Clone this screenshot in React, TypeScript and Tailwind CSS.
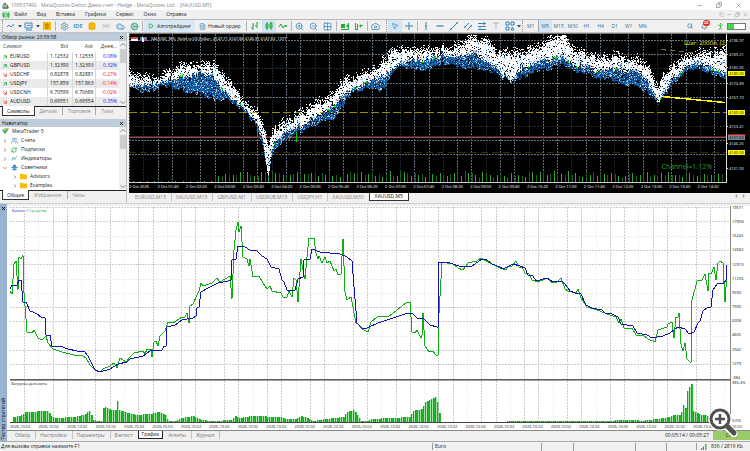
import { ReactNode, useState } from "react";
import {
  Bell, Camera, Cloud, Cog, FileText, Grid2x2, Minus, MousePointer2,
  PersonStanding, Play, Radio, Search, Settings, ShoppingBag, X, ZoomIn, ZoomOut, Copy, Users, RefreshCw,
} from "lucide-react";
import { clsx } from "clsx";
import { twMerge } from "tailwind-merge";

type Point = [number, number];
type Band  = [number, number, number, number]; // x, top, bottom of the white part, bottom of the blue part

const MENU       = ["Файл", "Вид", "Вставка", "Графики", "Сервис", "Окно", "Справка"];
const TIMEFRAMES = ["M1", "M5", "M15", "M30", "H1", "H4", "D1", "W1", "MN"];
const CHART_TABS = ["EURUSD,M15", "XAUUSD,M15", "GBPUSD,M1", "USDRUB,M15", "USDJPY,H1", "XAUUSD,M30", "XAUUSD,M5"];
const TEST_TABS  = ["Обзор", "Настройки", "Параметры", "Бэктест", "График", "Агенты", "Журнал"];

const QUOTES = [
  { symbol: "EURUSD", bid: "1.12532", ask: "1.12535", day: "0.08%",  up: true  },
  { symbol: "GBPUSD", bid: "1.32390", ask: "1.32393", day: "0.32%",  up: true  },
  { symbol: "USDCHF", bid: "0.82878", ask: "0.82881", day: "-0.27%", up: false },
  { symbol: "USDJPY", bid: "157.859", ask: "157.863", day: "-0.14%", up: true  },
  { symbol: "USDCNH", bid: "6.70599", ask: "6.70686", day: "-0.02%", up: false },
  { symbol: "AUDUSD", bid: "0.69551", ask: "0.69554", day: "0.35%",  up: false },
];

const TIMES = [
  "2026", "01:40", "02:20", "03:00", "03:40", "04:20", "05:00", "05:40", "06:20", "07:00", "07:40",
  "08:20", "09:00", "09:40", "10:20", "11:00", "11:40", "12:20", "13:00", "13:40", "14:20",
];

const BALANCE_SCALE = [19571, 17908, 16245, 14582, 12919, 11256, 9593, 7930, 6268, 4605, 2942, 1279, -384];

const PRICES = [
  { y: 40, v: "4196.37" }, { y: 54, v: "4189.21" }, { y: 67, v: "4182.05" }, { y: 83, v: "4174.89" },
  { y: 97, v: "4167.73" }, { y: 126, v: "4153.41" }, { y: 143, v: "4146.25" }, { y: 168, v: "4131.93" },
];

const BANDS: Band[] = [
  [129, 73, 83, 84], [140, 75, 84, 90], [150, 79, 84, 91], [158, 77, 82, 86], [165, 74, 80, 85], [175, 69, 78, 88],
  [185, 65, 75, 90], [195, 66, 74, 93], [205, 65, 73, 95], [213, 65, 76, 98], [222, 74, 88, 99], [229, 84, 96, 100],
  [240, 95, 105, 108], [250, 108, 116, 119], [257, 113, 124, 128], [262, 122, 140, 146], [265, 134, 158, 162],
  [268, 146, 175, 175], [271, 137, 152, 154], [275, 128, 140, 148], [282, 124, 134, 141], [290, 119, 130, 138],
  [298, 115, 127, 132], [312, 107, 119, 126], [325, 98, 112, 120], [333, 94, 105, 119], [340, 84, 98, 108],
  [347, 79, 93, 97], [358, 75, 86, 90], [367, 71, 82, 88], [378, 65, 78, 90], [384, 60, 74, 86], [393, 50, 67, 70],
  [402, 49, 62, 65], [412, 49, 59, 68], [426, 50, 60, 70], [440, 49, 56, 64], [450, 49, 55, 63], [463, 42, 56, 67],
  [473, 35, 52, 68], [482, 40, 58, 69], [490, 44, 63, 71], [500, 54, 73, 76], [510, 53, 79, 81], [520, 51, 70, 78],
  [533, 49, 63, 71], [543, 43, 60, 70], [555, 37, 58, 66], [563, 33, 56, 64], [570, 45, 62, 68], [583, 54, 67, 73],
  [600, 58, 70, 77], [617, 56, 69, 82], [633, 59, 71, 86], [643, 61, 76, 90], [651, 73, 90, 95], [658, 86, 104, 105],
  [663, 75, 93, 97], [673, 65, 77, 82], [687, 56, 66, 71], [700, 53, 62, 67], [713, 52, 68, 74], [726, 50, 76, 80],
];

const BALANCE: Point[] = [
  [10, 289], [12, 285], [17, 285], [19, 280], [21, 280], [23, 302], [26, 302], [30, 311], [33, 312], [37, 314],
  [41, 317], [45, 318], [46, 335], [50, 335], [52, 346], [60, 346], [68, 349], [77, 351], [85, 352], [88, 356],
  [92, 364], [95, 370], [100, 372], [110, 369], [118, 364], [127, 362], [130, 359], [143, 356], [150, 351],
  [162, 350], [164, 346], [166, 346], [167, 327], [175, 325], [182, 320], [193, 318], [196, 316], [197, 308],
  [199, 307], [201, 292], [210, 287], [218, 283], [228, 281], [231, 280], [232, 260], [236, 259], [238, 246],
  [245, 247], [250, 250], [257, 251], [262, 256], [267, 259], [271, 267], [279, 269], [282, 280], [284, 282],
  [287, 290], [295, 290], [298, 279], [303, 277], [304, 260], [310, 259], [312, 249], [320, 252], [340, 254],
  [347, 257], [352, 261], [354, 287], [357, 323], [362, 328], [367, 328], [378, 323], [393, 318], [408, 313],
  [413, 314], [417, 318], [424, 319], [430, 325], [437, 327], [438, 328], [439, 262], [447, 262], [462, 267],
  [472, 266], [482, 259], [487, 260], [492, 264], [500, 267], [503, 269], [513, 264], [520, 266], [525, 268],
  [528, 275], [533, 276], [536, 281], [547, 278], [553, 282], [562, 281], [565, 284], [570, 291], [575, 293],
  [581, 294], [586, 305], [592, 308], [602, 310], [605, 313], [612, 314], [618, 317], [621, 324], [633, 326],
  [637, 333], [647, 335], [652, 338], [663, 336], [670, 333], [678, 327], [685, 329], [689, 334], [694, 332],
  [698, 323], [700, 321], [703, 311], [707, 308], [711, 307], [713, 290], [717, 284], [724, 283], [726, 280], [727, 265],
];

const EQUITY: Point[] = [
  [10, 291], [12, 294], [14, 264], [16, 261], [18, 290], [19, 257], [21, 259], [23, 255], [24, 293], [27, 332],
  [32, 333], [34, 330], [38, 338], [42, 340], [46, 336], [48, 343], [53, 349], [62, 352], [70, 354], [78, 356],
  [82, 355], [86, 358], [90, 365], [94, 369], [100, 372], [103, 369], [110, 366], [114, 363], [117, 368],
  [120, 358], [126, 362], [130, 357], [134, 353], [143, 351], [145, 354], [147, 349], [151, 349], [152, 357],
  [154, 342], [156, 341], [158, 346], [160, 336], [165, 331], [168, 322], [173, 323], [182, 317], [185, 317],
  [187, 313], [189, 323], [190, 306], [193, 304], [197, 295], [199, 291], [201, 283], [203, 286], [212, 283],
  [217, 278], [220, 282], [230, 276], [232, 299], [234, 250], [236, 230], [238, 222], [239, 232], [241, 226],
  [243, 257], [247, 259], [249, 266], [250, 259], [253, 277], [259, 276], [263, 283], [267, 289], [270, 286],
  [272, 291], [281, 293], [283, 297], [287, 297], [289, 291], [292, 297], [294, 278], [296, 280], [298, 302],
  [300, 272], [301, 259], [303, 270], [305, 279], [307, 257], [309, 238], [314, 238], [316, 253], [318, 259],
  [319, 256], [322, 263], [325, 257], [327, 263], [330, 261], [334, 271], [336, 269], [338, 275], [341, 274],
  [343, 239], [345, 292], [347, 300], [351, 297], [356, 323], [358, 324], [362, 329], [368, 332], [371, 322],
  [377, 317], [385, 316], [388, 317], [397, 310], [407, 302], [410, 302], [412, 332], [415, 333], [417, 330],
  [421, 338], [422, 335], [423, 313], [425, 346], [429, 352], [433, 351], [436, 355], [438, 355], [439, 313],
  [442, 262], [447, 263], [453, 264], [458, 268], [463, 270], [468, 263], [477, 261], [481, 258], [490, 263],
  [500, 268], [506, 270], [508, 266], [512, 266], [516, 261], [519, 267], [522, 267], [525, 273], [529, 274],
  [532, 280], [538, 282], [547, 278], [552, 283], [557, 282], [561, 278], [565, 289], [568, 291], [576, 293],
  [578, 289], [581, 298], [587, 307], [597, 310], [610, 315], [616, 317], [619, 323], [621, 319], [624, 328],
  [632, 328], [636, 335], [643, 335], [648, 339], [655, 342], [658, 330], [667, 327], [668, 324], [672, 322],
  [674, 338], [676, 317], [678, 317], [679, 313], [681, 344], [683, 351], [685, 343], [687, 359], [691, 363],
  [692, 300], [697, 281], [702, 280], [705, 274], [708, 291], [709, 273], [711, 274], [714, 267], [716, 280],
  [718, 263], [720, 261], [723, 263], [725, 302], [727, 273],
];

const LOAD: Point[] = [
  [13, 5], [20, 6], [25, 10], [48, 11], [51, 6], [55, 4], [75, 5], [85, 8], [90, 12], [92, 2], [98, 1], [101, 1],
  [102, 14], [106, 15], [110, 12], [116, 12], [117, 21], [119, 12], [128, 9], [135, 7], [150, 8], [158, 10],
  [165, 7], [168, 1], [176, 1], [180, 4], [193, 6], [200, 2], [213, 1], [232, 2], [234, 6], [240, 4], [250, 6],
  [280, 5], [285, 3], [296, 3], [300, 6], [307, 4], [312, 1], [325, 3], [343, 5], [346, 10], [353, 12], [358, 6],
  [361, 1], [368, 1], [372, 3], [390, 4], [410, 5], [412, 11], [422, 13], [424, 19], [430, 22], [436, 26],
  [439, 9], [441, 0], [505, 0], [507, 1], [612, 1], [615, 2], [634, 2], [640, 1], [657, 3], [670, 5], [673, 7],
  [680, 7], [682, 12], [684, 22], [685, 14], [687, 31], [691, 38], [692, 12], [700, 7], [712, 6], [727, 5],
];

// small LCG so that the tick cloud is the same on every render
function makeRandom(seed: number) {
  let s = seed;
  return () => {
    s = (s * 1664525 + 1013904223) % 4294967296;
    return s / 4294967296;
  };
}

function bandAt(x: number): Band {
  const i = Math.max(1, BANDS.findIndex((b) => b[0] >= x));
  const a = BANDS[i - 1];
  const b = BANDS[i];
  const t = (x - a[0]) / (b[0] - a[0]);
  return [x, a[1] + (b[1] - a[1]) * t, a[2] + (b[2] - a[2]) * t, a[3] + (b[3] - a[3]) * t];
}

function levelAt(points: Point[], x: number) {
  const i = Math.max(1, points.findIndex((p) => p[0] >= x));
  const [x0, y0] = points[i - 1];
  const [x1, y1] = points[i];
  return y0 + ((y1 - y0) * (x - x0)) / (x1 - x0);
}

function buildCloud() {
  const rnd = makeRandom(7);
  const out = { white: "", blue: "", pale: "", dark: "", green: "", red: "" };
  let rise = 0;
  let drop = 0;
  for (let x = 129; x < 726; x++) {
    const [, bandTop, bandMid, bandLow] = bandAt(x);
    if (x % 3 === 0) {
      rise = Math.round(rnd() * 5) - 3;
      drop = Math.round(rnd() * 4) - 2;
    }
    const top = bandTop + rise;
    const mid = bandMid + drop;
    const low = bandLow + drop;
    for (let y = Math.max(35, Math.floor(top) - 3); y <= low; y++) {
      const dot = `M${x} ${y}h1v1h-1z`;
      const r = rnd();
      if (y < top)            { if (r < 0.22) out.white += dot; }
      else if (y < top + 3)   { if (r < 0.5) out.white += dot; else if (r < 0.56) out.pale += dot; }
      else if (y < mid - 2)   { if (r < 0.8) out.white += dot; else if (r < 0.88) out.pale += dot; else if (r < 0.92) out.blue += dot; }
      else if (y < mid + 1)   { if (r < 0.42) out.white += dot; else if (r < 0.6) out.pale += dot; else if (r < 0.85) out.blue += dot; }
      else                    { if (r < 0.14) out.pale += dot; else if (r < 0.6) out.blue += dot; else if (r < 0.85) out.dark += dot; }
    }
    const k = rnd();
    if (k < 0.08) out.green += `M${x} ${Math.round(mid)}h1v2h-1z`;
    else if (k < 0.13) out.red += `M${x} ${Math.round(mid - 4)}h1v1h-1z`;
  }
  return out;
}

const CLOUD = buildCloud();
const COLUMNS = Array.from({ length: 42 }, (_, i) => i);

const volumeRandom = makeRandom(21);
const VOLUMES = Array.from({ length: 167 }, (_, i) => {
  const early = i < 24;
  return { x: 129 + Math.round(i * 3.57), h: early ? (i % 2 ? 2 : 1) : 6 + Math.round(volumeRandom() * 6) };
});

const BARS = Array.from({ length: 356 }, (_, i) => {
  const x = 13 + i * 2;
  return { x, h: Math.round(levelAt(LOAD, x)) };
}).filter((b) => b.h > 0);

const toLine = (points: Point[]) => points.map((p) => p.join(",")).join(" ");

function Tool({ label, active, children }: { label: string; active?: boolean; children: ReactNode }) {
  return (
    <button
      aria-label={label}
      className={clsx("flex h-3 w-3.5 shrink-0 items-center justify-center text-[#3484b8]", active && "bg-[#d3e5f3]")}
    >
      {children}
    </button>
  );
}

function Glyph({ d, className, fill }: { d: string; className?: string; fill?: boolean }) {
  return (
    <svg
      viewBox="0 0 10 10"
      className={twMerge("size-2.5 shrink-0", className)}
      fill={fill ? "currentColor" : "none"}
      stroke={fill ? "none" : "currentColor"}
    >
      <path d={d} />
    </svg>
  );
}

const Separator = () => <span className="mx-px h-2.5 w-px shrink-0 bg-[#b4b4b4]" />;
const Handle    = () => <span className="mx-px h-3 shrink-0 border-l border-dotted border-[#999]" />;
const Caret     = () => <Glyph fill className="size-1 text-[#222]" d="M0 3h10l-5 5z" />;

function TitleBar() {
  return (
    <header className="flex h-2.5 items-center bg-white pl-[1px] text-[#858585]">
      <svg viewBox="0 0 9 9" className="mr-px size-[9px]">
        <path d="M1 7c0-3 1-5 3-6l1 2 2 1 1 3-2 1H2z" fill="#8cb0a4" />
        <path d="M2 7h5M4 2l1 3M6 4l1 3" stroke="#376f72" />
        <path d="M4 4h2v2H4z" fill="#eab54a" />
      </svg>
      <h1 className="flex-1 truncate">109537492 - MetaQuotes-Demo: Демо-счет - Hedge - MetaQuotes Ltd. - [XAUUSD,M5]</h1>
      <div className="flex gap-[13px] pr-2">
        <button aria-label="Свернуть"><Minus size={7} strokeWidth={2} /></button>
        <button aria-label="Окно"><Copy size={6} strokeWidth={3} className="-scale-x-100" /></button>
        <button aria-label="Закрыть"><X size={7} strokeWidth={2} /></button>
      </div>
    </header>
  );
}

function MenuBar() {
  return (
    <nav className="flex h-[10px] items-center border-b border-[#b9b9b9] bg-[#f0f0f0] pl-[2px] text-[#222]">
      <Glyph className="mr-px size-2 text-[#25b33b]" d="M2 1v8M1 3h2v4H1zM5 1v8M7 3h2v4H7zM8 1v8" />
      <div className="flex flex-1 gap-2.5 pl-[3px]">
        {MENU.map((m) => <button key={m}>{m}</button>)}
      </div>
      <div className="flex gap-[3px] pr-0.5 text-[#a5a5a5]">
        <button aria-label="Во весь экран"><Copy size={5} strokeWidth={2} /></button>
        <button aria-label="Свернуть график"><Minus size={5} strokeWidth={3} /></button>
        <button aria-label="Восстановить график"><Copy size={5} strokeWidth={3} className="-scale-x-100" /></button>
        <button aria-label="Закрыть график"><X size={5} strokeWidth={3} /></button>
      </div>
    </nav>
  );
}

function Toolbar() {
  const [frame, setFrame] = useState("M5");
  return (
    <div className="flex h-[13px] items-center border-b border-[#c4c4c4] bg-[#f0f0f0] pl-px">
      <Handle />
      <Tool label="Тип графика"><Glyph d="M1 6l2-2 2 2 3-3" /></Tool>
      <Caret />
      <Tool label="Профили"><Glyph d="M1 2h7v5H1zM2 9h6M3 5l2-1 2 1" /></Tool>
      <Caret />
      <Tool label="Торговля">
        <svg viewBox="0 0 10 10" className="size-2.5"><path d="M1 1h8v8H1z" fill="#f6b800" /><path d="M4 3h2v4H4z" fill="none" stroke="#a87800" /></svg>
      </Tool>
      <Separator />
      <Tool label="Настройки"><Settings size={9} /></Tool>
      <Tool label="IDE"><span className="text-[6px] font-semibold leading-none">IDE</span></Tool>
      <Tool label="Маркет"><ShoppingBag size={8} fill="#f6b800" className="text-[#e6a400]" /></Tool>
      <Tool label="Сигналы"><Radio size={8} className="text-[#b7b7b7]" /></Tool>
      <Tool label="VPS"><Cloud size={9} fill="#c9e2f2" /></Tool>
      <Tool label="Агенты"><Cog size={9} className="text-[#2f9b86]" /></Tool>
      <Separator />
      <button className="flex h-3 shrink-0 items-center gap-[3px] bg-[#d9e7f3] px-1 text-[#222]">
        <Play size={6} className="text-[#25a74a]" strokeWidth={3} />Алготрейдинг
      </button>
      <button className="flex h-3 shrink-0 items-center gap-0.5 px-1 text-[#222]">
        <FileText size={7} className="text-[#3484b8]" />Новый ордер
      </button>
      <Separator />
      <Tool label="Бары"><Glyph className="text-[#23ab3b]" d="M3 2v7M1 7h2M3 4h1M7 1v6M5 5h2M7 2h1" /></Tool>
      <Tool label="Свечи" active><Glyph className="text-[#23ab3b]" d="M2 3h2v4H2zM3 1v8M6 2h2v5H6zM7 1v8" /></Tool>
      <Tool label="Линия"><Glyph className="text-[#23ab3b]" d="M1 6l2-3 2 4 2-3 1 2 1-2" /></Tool>
      <Separator />
      <Tool label="Увеличить"><ZoomIn size={9} /></Tool>
      <Tool label="Уменьшить"><ZoomOut size={9} /></Tool>
      <Tool label="Окна"><Grid2x2 size={9} /></Tool>
      <Separator />
      <Tool label="Автопрокрутка">
        <Glyph fill className="text-[#23ab3b]" d="M1 3h4v4H1zM6 5l2-2v4zM8 2h1v6H8zM1 8h8v1H1z" />
      </Tool>
      <Tool label="Сдвиг графика">
        <Glyph fill className="text-[#23ab3b]" d="M1 2h1v6H1zM3 3h1v5H3zM5 5l2-2v4zM7 4h2v1H7zM1 8h3v1H1z" />
      </Tool>
      <Separator />
      <Tool label="Снимок"><Camera size={9} /></Tool>
      <span className="w-0.5" />
      <Handle />
      <Tool label="Курсор" active><MousePointer2 size={8} /></Tool>
      <Tool label="Перекрестие"><Glyph d="M5 1v8M1 5h8" /></Tool>
      <Separator />
      <Tool label="Вертикальная линия"><Glyph d="M5 1v8M4 5h2" /></Tool>
      <Tool label="Горизонтальная линия"><Glyph d="M1 5h8M5 4v2" /></Tool>
      <Tool label="Трендовая линия"><Glyph d="M1 9l8-8M1 8h2M7 2h2" /></Tool>
      <Tool label="Канал"><Glyph d="M1 7l5-5M4 9l5-5M1 6h2M7 5h2" /></Tool>
      <Tool label="Фибоначчи"><Glyph d="M1 2.5h8M1 5.5h8M1 8.5h8M7 1v3M3 7v2" /></Tool>
      <Tool label="Текст"><Glyph className="text-[#b9b9b9]" d="M2 2h6M5 2v7" /></Tool>
      <Tool label="Объекты"><Glyph d="M1 1h3v3H1zM6 1h3v3H6zM1 6h3v3H1zM6 9l1.500-3L9 9z" /></Tool>
      <Caret />
      <Handle />
      {TIMEFRAMES.map((t) => (
        <button
          key={t}
          onClick={() => setFrame(t)}
          className={clsx("h-3 w-3.5 shrink-0 text-center text-[#2f6f9f]", frame === t && "border-l border-[#aaa] bg-[#d3e5f3]")}
        >
          {t}
        </button>
      ))}
      <div className="ml-auto flex shrink-0 items-center pr-1">
        <Tool label="Поиск"><Search size={6} strokeWidth={3} /></Tool>
        <div className="relative mr-0.5">
          <Tool label="Уведомления"><Bell size={7} className="text-[#555]" /></Tool>
          <span className="absolute top-0 left-1.5 rounded-full bg-[#e03020] px-px text-[4px] leading-[6px] font-bold text-white">22</span>
        </div>
        <Tool label="Профиль"><PersonStanding size={9} className="text-[#23ab3b]" /></Tool>
        <span className="flex h-[7px] w-[19px] border border-[#777] bg-white"><span className="w-1.5 bg-[#3ddb4a]" /></span>
      </div>
    </div>
  );
}

function PanelHeader({ title }: { title: string }) {
  return (
    <div className="flex h-2 items-center justify-between bg-[#bfcddb] px-0.5 text-[#111]">
      <h2>{title}</h2>
      <button aria-label="Закрыть"><X size={5} strokeWidth={4} /></button>
    </div>
  );
}

function ScrollBar() {
  return (
    <div className="flex w-[7px] flex-col items-center bg-[#f0f0f0] text-[#666]">
      <Glyph className="size-2" d="M2 6l3-3 3 3" />
      <span className="h-3.5 w-1.5 bg-[#cdcdcd]" />
      <Glyph className="mt-auto size-2" d="M2 4l3 3 3-3" />
    </div>
  );
}

function PanelTabs({ tabs }: { tabs: string[] }) {
  return (
    <div className="flex h-[10px] items-start border-t border-[#222] text-[#8b8b8b]">
      {tabs.map((t, i) => (
        <button
          key={t}
          className={clsx(
            "leading-[8px]",
            i === 0 ? "-mt-px ml-0.5 h-[10px] border-x border-b border-[#333] bg-white px-1 text-[#111]" : "h-2 border-r border-[#aaa] px-[5px] last:border-0",
          )}
        >
          {t}
        </button>
      ))}
    </div>
  );
}

function MarketWatch() {
  return (
    <section>
      <PanelHeader title="Обзор рынка: 23:59:58" />
      <div className="flex bg-white">
        <table className="flex-1 table-fixed border-collapse text-right text-[#111]">
          <thead>
            <tr className="h-[11px] text-[#444]">
              <th className="w-[47px] pl-[3px] text-left font-normal">Символ</th>
              <th className="w-[25px] pr-1 font-normal">Bid</th>
              <th className="w-[23px] pr-0.5 font-normal">Ask</th>
              <th className="pr-0.5 font-normal">Днев...</th>
            </tr>
          </thead>
          <tbody>
            {QUOTES.map((q) => (
              <tr key={q.symbol} className="h-[9px] even:bg-[#ebebeb]">
                <td className="border-r border-[#d8d8d8] pl-[3px] text-left">
                  <span className="flex items-center gap-[3px]">
                    <Glyph
                      className={clsx("size-1 stroke-2", q.up ? "text-[#12a03a]" : "text-[#e0442e]")}
                      d={q.up ? "M1 9l7-7M2 2h7v7" : "M1 1l7 7M2 8h7V1"}
                    />
                    {q.symbol}
                  </span>
                </td>
                <td className="border-r border-[#d8d8d8] pr-[3px]">{q.bid}</td>
                <td className="border-r border-[#d8d8d8] pr-px">{q.ask}</td>
                <td className={clsx("pr-0.5", q.day.startsWith("-") ? "text-[#ff2020]" : "text-[#2222ee]")}>{q.day}</td>
              </tr>
            ))}
          </tbody>
        </table>
        <ScrollBar />
      </div>
      <PanelTabs tabs={["Символы", "Детали", "Торговля", "Тики"]} />
    </section>
  );
}

function Navigator() {
  const items = [
    { label: "Счета",      icon: <Users size={7} className="text-[#3484b8]" /> },
    { label: "Подписки",   icon: <RefreshCw size={6} strokeWidth={3} className="text-[#35ae52]" /> },
    { label: "Индикаторы", icon: <Glyph className="size-[7px] text-[#3f9bb5]" d="M1 8l2-5 2 4 2-4 2-1" /> },
    { label: "Советники",  icon: <Glyph fill className="size-[7px] text-[#3f8fc4]" d="M0 5l5-3 5 3-5 2zM2 7h6v2H2zM3 1h4v3H3z" />, open: true },
  ];
  return (
    <section className="mt-[3px]">
      <PanelHeader title="Навигатор" />
      <div className="flex bg-white text-[#222]">
        <ul className="flex-1">
          <li className="flex h-[9px] items-center gap-[3px] pl-0.5">
            <svg viewBox="0 0 8 8" className="size-[7px]">
              <path d="M0 1l4 2v4L1 4z" fill="#2fa8df" /><path d="M3 1l5-1-2 4-3 3z" fill="#62b53c" /><path d="M2 0h3v3z" fill="#f3c12c" />
            </svg>
            MetaTrader 5
          </li>
          {items.map((n) => (
            <li key={n.label} className="flex h-[9px] items-center gap-[3px] pl-[3px]">
              <Glyph className="size-1 stroke-2 text-[#777]" d={n.open ? "M1 3l4 4 4-4" : "M3 1l4 4-4 4"} />
              <span className="w-2 pl-px">{n.icon}</span>
              {n.label}
            </li>
          ))}
          {["Advisors", "Examples"].map((n) => (
            <li key={n} className="flex h-[9px] items-center gap-[3px] pl-[13px]">
              <Glyph className="size-1 stroke-2 text-[#777]" d="M3 1l4 4-4 4" />
              <Glyph fill className="size-[7px] text-[#f6bd10]" d="M0 1h4l1 1h5v7H0z" />
              {n}
            </li>
          ))}
        </ul>
        <ScrollBar />
      </div>
      <PanelTabs tabs={["Общие", "Избранное", "Чаты"]} />
    </section>
  );
}

function PriceScale() {
  return (
    <svg viewBox="726 34 24 149" className="h-[149px] w-6 shrink-0 text-[4px]" fill="#e8e8e8">
      <path d="M726.500 34v149" stroke="#ddd" />
      {PRICES.map((p) => (
        <g key={p.v}>
          <path d={`M726 ${p.y + 0.5}h2`} stroke="#ddd" />
          <text x={729} y={p.y + 2}>{p.v}</text>
        </g>
      ))}
      <path d="M728 71h17v5h-17zM728 110h17v5h-17zM728 150h17v5h-17z" fill="#ffff00" />
      <path d="M728 134h17v2h-17z" fill="#e00000" />
      <path d="M728 135h17v5h-17z" fill="#778899" />
      <g fill="#000">
        <text x={729} y={75}>4180.00</text>
        <text x={729} y={114}>4160.00</text>
        <text x={729} y={139}>4147.63</text>
        <text x={729} y={154}>4140.00</text>
      </g>
    </svg>
  );
}

function PriceChart() {
  return (
    <div className="border-t border-[#777] bg-black text-white">
      <div className="flex">
        <div className="relative min-w-0 flex-1">
          <svg viewBox="129 34 597 149" preserveAspectRatio="none" className="h-[149px] w-full" shapeRendering="crispEdges">
            {COLUMNS.map((i) => {
              const x = 129 + Math.round(i * 14.27);
              return <path key={i} d={`M${x + 0.5} 34v149`} stroke={i % 3 === 1 ? "#20262c" : "#5f6c79"} strokeDasharray="2 1" />;
            })}
            <path d="M129 40.500h597M129 54.500h597M129 83.500h597M129 97.500h597M129 140.500h597M129 154.500h597" stroke="#66737f" strokeDasharray="2 1" />
            <path d="M129 68.500h597M129 126.500h597" stroke="#242a30" strokeDasharray="2 1" />
            <path d="M129 112.500h597" stroke="#8f8f00" strokeDasharray="8 3" />
            <path d="M129 152.500h597" stroke="#333300" strokeDasharray="7 4" />
            <path d="M129 136.500h597" stroke="#7c1616" />
            <path d="M129 137.500h597" stroke="#56606a" />
            {VOLUMES.map((v, i) => (
              <path key={v.x} d={`M${v.x + 0.5} 183v-${v.h}`} stroke={i % 2 ? "#35a535" : "#1c5c1c"} />
            ))}
            <path d="M175 82l42 12M185 83l40 14M200 84l28 14M580 67l65 19M600 71l45 17M165 82l30 8" stroke="#0b4f91" />
            <path d={CLOUD.dark} fill="#0a3f78" />
            <path d={CLOUD.blue} fill="#1768b3" />
            <path d={CLOUD.pale} fill="#a8c8e4" />
            <path d={CLOUD.white} fill="#fff" />
            <path d={CLOUD.green} fill="#00d800" />
            <path d={CLOUD.red} fill="#e5472c" />
            <path d="M129.500 84v8M257.500 124v13M411.500 60v9M289.500 132v8M296.500 132v10" stroke="#00c800" />
            <path d="M662 96.500l63 6" stroke="#ffff00" strokeWidth="1.500" />
            <path d="M661 49.500l36 4" stroke="#77733a" strokeDasharray="5 4" />
            <path d="M129 182.500h597" stroke="#ccc" />
          </svg>
          <div className="absolute top-0.5 left-0.5 flex items-center gap-1 text-[4px] leading-[6px]">
            <svg viewBox="0 0 16 6" className="h-1.5 w-4">
              <path d="M0 1h7v2H0z" fill="#e24a3b" /><path d="M0 3h7v2H0z" fill="#fff" />
              <path d="M9 1h7v4H9z" fill="#3b78d8" /><path d="M11 0l2 3v3h-2z" fill="#fff" /><path d="M13 2h2v3h-2z" fill="#e24a3b" />
            </svg>
            <span>XAUUSD, M5:&nbsp; Gold vs US Dollar: &nbsp;4147.71 4147.84 4146.97 4147.63 &nbsp;1377</span>
          </div>
          <span className="absolute top-[5px] right-px text-[6px] leading-2 whitespace-nowrap text-[#e8e800]">Шаг: 2000п. (2</span>
          <span className="absolute right-3.5 bottom-3 text-[7px] leading-2 text-[#1fa01f]">Channel=1.12%</span>
        </div>
        <PriceScale />
      </div>
      <div className="mr-6 grid h-2.5 grid-cols-21 text-[4px] leading-[7px] whitespace-nowrap">
        {TIMES.map((t) => <span key={t}>2 Oct {t}</span>)}
      </div>
    </div>
  );
}

function ChartTabs() {
  return (
    <div className="flex h-2.5 items-start pl-px text-[#858585]">
      {CHART_TABS.map((t) => (
        <button
          key={t}
          className={clsx(
            "h-2 leading-[7px]",
            t === "XAUUSD,M5" ? "border-x border-b border-[#333] bg-white px-[5px] text-[#111]" : "px-[5px] shadow-[1px_0_0_#c4c4c4]",
          )}
        >
          {t}
        </button>
      ))}
      <div className="ml-auto flex gap-1 pt-px pr-1 text-[#999]">
        <button aria-label="Назад"><Glyph fill className="size-1" d="M8 0v10L3 5z" /></button>
        <button aria-label="Вперёд"><Glyph fill className="size-1" d="M2 0v10l5-5z" /></button>
      </div>
    </div>
  );
}

function TesterGraph() {
  return (
    <div className="flex bg-white">
      <div className="relative min-w-0 flex-1">
        <svg viewBox="10 206 720 217" preserveAspectRatio="none" className="h-[217px] w-full" fill="none" shapeRendering="crispEdges">
          <g strokeDasharray="2 1">
            {Array.from({ length: 50 }, (_, i) => (
              <path key={i} d={`M${24.5 + Math.round(i * 14.29)} 207v215`} stroke={i % 3 === 1 ? "#f0f0f0" : "#cccccc"} />
            ))}
            <path d="M10 207.500h720M10 221.500h720M10 250.500h720M10 264.500h720M10 307.500h720M10 321.500h720M10 350.500h720M10 364.500h720" stroke="#cccccc" />
            <path d="M10 236.500h720M10 279.500h720M10 293.500h720M10 336.500h720" stroke="#efefef" />
          </g>
          <polyline points={toLine(EQUITY)} stroke="#12ac16" />
          <polyline points={toLine(BALANCE)} stroke="#1111ab" />
          <path d="M10 379.500h720" stroke="#5c5c5c" />
          <path d="M10 380.500h720" stroke="#a0a0a0" />
          {BARS.map((b) => <path key={b.x} d={`M${b.x + 0.5} 422v-${b.h}`} stroke="#0bb010" />)}
          {BARS.map((b) => <path key={b.x} d={`M${b.x + 1.5} 422v-${b.h}`} stroke="#0bb010" opacity={b.x % 6 === 1 ? 0.9 : 0.35} />)}
          <path d="M10 422.500h720" stroke="#444" />
        </svg>
        <p className="absolute top-0.5 left-0.5 bg-white text-[4px] leading-[5px]">
          <span className="text-[#2222dd]">Баланс</span> / <span className="text-[#12ac16]">Средства</span>
        </p>
        <p className="absolute top-[175px] left-px text-[4px] leading-[5px] text-[#111]">Загрузка депозита</p>
      </div>
      <div className="flex w-5 shrink-0 flex-col border-l border-[#888] pl-px text-[4px] leading-[4px] text-[#111]">
        <div className="flex h-[174px] flex-col justify-between">
          {BALANCE_SCALE.map((v) => <span key={v}>{v}</span>)}
        </div>
        <span className="mt-px">383.4%</span>
        <span className="mt-auto">0.0%</span>
      </div>
    </div>
  );
}

function Tester() {
  return (
    <section className="flex border-t border-[#d0d0d0]">
      <div className="flex w-[7px] shrink-0 flex-col items-center justify-between bg-[#99b4d1] pt-0.5">
        <button aria-label="Закрыть тестер"><X size={5} strokeWidth={4} /></button>
        <h2 className="rotate-180 pt-px leading-[7px] [writing-mode:vertical-rl]">Тестер стратегий</h2>
      </div>
      <div className="relative min-w-0 flex-1">
        <div className="mt-0.5 border-b border-[#888] bg-white pl-[3px]">
          <TesterGraph />
          <div className="grid h-[7px] grid-cols-26 text-[4px] leading-[7px] whitespace-nowrap text-[#222]">
            {Array.from({ length: 26 }, (_, i) => <span key={i}>2026.10.02</span>)}
          </div>
        </div>
        <div className="flex h-2.5 items-start pl-[3px] text-[#777]">
          {TEST_TABS.map((t) => (
            <button
              key={t}
              className={clsx(
                "h-2 leading-[7px]",
                t === "График" ? "border-x border-b border-[#222] bg-white px-[3px] text-[#111]" : "px-[5px] shadow-[1px_0_0_#c4c4c4]",
              )}
            >
              {t}
            </button>
          ))}
          <span className="ml-auto pr-1 leading-[9px] text-[#222]">00:05:14 / 00:05:27</span>
          <button className="h-[9px] w-[37px] bg-[#9bcb66] leading-[9px] text-[#222]">Стоп</button>
        </div>
        <svg viewBox="0 0 30 30" className="absolute right-3 bottom-1 size-[30px]" fill="none">
          <path d="M17 18l9 9" stroke="#fff" strokeWidth="7" strokeLinecap="round" />
          <circle cx="12" cy="12" r="10" fill="#fff" stroke="#fff" strokeWidth="3" />
          <circle cx="12" cy="12" r="9" fill="#fff" stroke="#505050" strokeWidth="3" />
          <path d="M12 7v10M7 12h10" stroke="#505050" strokeWidth="2.500" />
          <path d="M19 19l7 7" stroke="#505050" strokeWidth="5" strokeLinecap="round" />
        </svg>
      </div>
    </section>
  );
}

function StatusBar() {
  return (
    <footer className="flex h-2.5 items-center border-t border-[#aaa] text-[#222]">
      <span className="flex-1 pl-px">Для вызова справки нажмите F1</span>
      <span className="w-[109px] border-l border-[#999] pl-0.5">Euro</span>
      <span className="h-2 w-8 border-l border-[#999]" />
      <span className="h-2 w-[62px] border-l border-[#999]" />
      <span className="h-2 w-[31px] border-l border-[#999]" />
      <span className="h-2 w-[30px] border-l border-[#999]" />
      <span className="flex w-[54px] items-center gap-1 border-l border-[#999] pl-1">
        <Glyph fill className="size-1.5 text-[#23ab3b]" d="M0 7h2v3H0zM3 4h2v6H3zM7 0h2v10H7z" />
        836 / 2819 Kb
      </span>
    </footer>
  );
}

export default function App() {
  return (
    <div className="min-h-[451px] overflow-hidden bg-[#f0f0f0] font-['Open_Sans','Liberation_Sans',sans-serif] text-[5px] leading-[7px]">
      <TitleBar />
      <MenuBar />
      <Toolbar />
      <main>
        <div className="flex">
          <aside className="w-[127px] shrink-0 border-r border-[#c0c0c0]">
            <MarketWatch />
            <Navigator />
          </aside>
          <div className="ml-0.5 min-w-0 flex-1">
            <PriceChart />
            <ChartTabs />
          </div>
        </div>
        <Tester />
      </main>
      <StatusBar />
    </div>
  );
}
